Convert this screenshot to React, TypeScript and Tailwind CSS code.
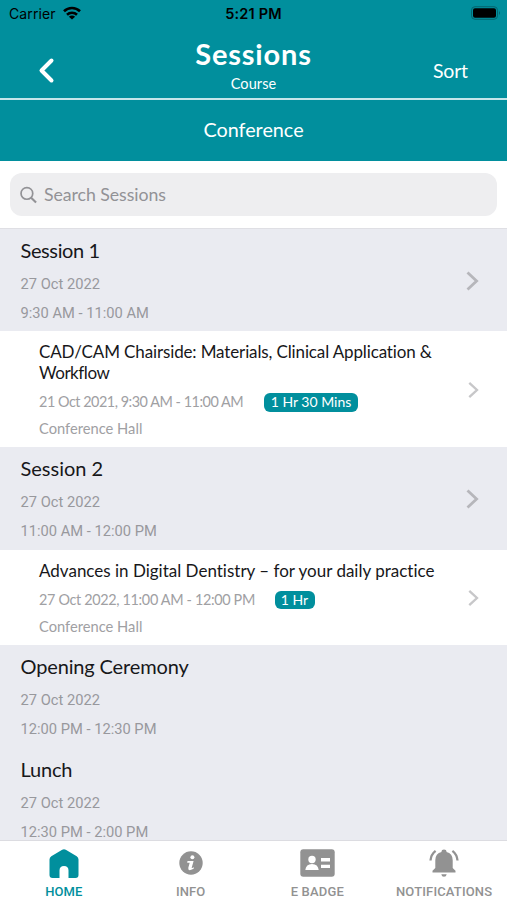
import React from "react";

const lato = "font-['Lato','Liberation_Sans',sans-serif]";

function Chevron({ small = false }: { small?: boolean }) {
  return (
    <svg
      className={small ? "mt-px h-[18px] w-[11px] text-[#c7c7c9]" : "mt-px h-[20px] w-[13px] text-[#b6b6bb]"}
      viewBox="0 0 13 20"
      fill="none"
      stroke="currentColor"
      strokeWidth="2.8"
    >
      <path d="M1.5 1.5 L10.6 10 L1.5 18.5" />
    </svg>
  );
}

function StatusBar() {
  return (
    <div className="flex h-[27px] items-center justify-between px-[8px] font-['Inter',sans-serif] text-black">
      <div className="flex w-40 items-center gap-[7px] pl-px">
        <span className="text-[14px] tracking-[0.1px]">Carrier</span>
        <svg className="-mt-px h-[14px] w-[18px]" viewBox="0 0 18 14" fill="none" stroke="currentColor" strokeWidth="2.6">
          <path d="M1 5.2 A11.5 11.5 0 0 1 17 5.2" />
          <path d="M4 8.7 A7.2 7.2 0 0 1 14 8.7" />
          <path d="M9 13.6 L5.9 10.7 A4.4 4.4 0 0 1 12.1 10.7 Z" fill="currentColor" stroke="none" />
        </svg>
      </div>
      <span className="text-[14.5px] font-semibold tracking-[0.2px]">5:21 PM</span>
      <div className="flex w-40 justify-end">
        <svg className="-mr-[2px] -mt-px h-[14px] w-[30px]" viewBox="0 0 30 14">
          <rect x="0.5" y="0.7" width="26" height="12.6" rx="3.5" fill="none" stroke="#04656f" />
          <rect x="2" y="2.2" width="23" height="9.6" rx="2" fill="#000" />
          <path d="M28 5 Q30 7 28 9 Z" fill="#04656f" />
        </svg>
      </div>
    </div>
  );
}

function Session({ title, time, titleClass = "", frameClass = "", arrow = false }: { title: string; time: string; titleClass?: string; frameClass?: string; arrow?: boolean }) {
  return (
    <section className={`flex h-[103px] shrink-0 items-center justify-between bg-[#eaebf1] pl-[20.5px] pr-7 ${frameClass}`}>
      <div className="flex h-full flex-col whitespace-nowrap pt-[8px]">
        <h2 className={`h-[29px] text-[20px] leading-[27px] text-[#17171a] ${titleClass}`}>{title}</h2>
        <p className="h-[30px] pt-[3px] font-['Roboto',sans-serif] text-[14.7px] leading-[30px] text-[#98989d]">27 Oct 2022</p>
        <p className="font-['Roboto',sans-serif] text-[14.7px] leading-[35px] text-[#98989d]">{time}</p>
      </div>
      {arrow && <Chevron />}
    </section>
  );
}

function Tab({ label, active = false, labelClass, children }: { label: string; active?: boolean; labelClass: string; children: React.ReactNode }) {
  return (
    <div className={`flex flex-1 flex-col items-center pl-px pt-[6px] ${active ? "text-[#018f9d]" : "text-[#929292]"}`}>
      <div className="flex h-[35px] items-center">{children}</div>
      <span className={`whitespace-nowrap font-['Roboto',sans-serif] text-[13px] font-medium leading-[16px] ${labelClass}`}>{label}</span>
    </div>
  );
}

export default function App() {
  return (
    <div className={`flex h-[900px] w-[507px] flex-col overflow-hidden bg-white [font-variant-ligatures:none] ${lato}`}>
      <header className="h-[161px] shrink-0 bg-[#018f9d] text-white">
        <StatusBar />
        <div className="grid h-[73px] grid-cols-[120px_1fr_120px]">
          <div className="pl-[38px] pt-[30px]">
            <svg className="h-[27px] w-[17px]" viewBox="0 0 17 27" fill="none" stroke="currentColor" strokeWidth="4" strokeLinecap="round" strokeLinejoin="round">
              <path d="M13.5 3.5 L3.5 13.5 L13.5 23.5" />
            </svg>
          </div>
          <div className="flex flex-col items-center pt-[9px]">
            <h1 className="text-[29px] font-bold leading-9 tracking-[0.8px]">Sessions</h1>
            <span className="text-[14.5px] leading-[23px] tracking-[0.1px]">Course</span>
          </div>
          <span className="pl-[46px] pt-[30px] text-[19.5px] leading-7 tracking-[-0.2px]">Sort</span>
        </div>
        <div className="-mt-[2px] h-[2px] bg-[#c5e6ea]" />
        <div className="flex h-[59px] items-center justify-center text-[19.8px]">Conference</div>
      </header>

      <div className="h-[67px] shrink-0 px-[10px] pt-3">
        <div className="flex h-[43px] items-center gap-[7px] rounded-[12px] bg-[#eeeef0] pl-[10px] text-[#929296]">
          <svg className="h-[18px] w-[17px]" viewBox="0 0 18 18" fill="none" stroke="currentColor" strokeWidth="1.8">
            <circle cx="7.3" cy="7.3" r="6.2" />
            <path d="M11.8 11.8 L17 17" strokeWidth="2.2" />
          </svg>
          <span className="pt-[2px] text-[17.7px] tracking-[-0.05px]">Search Sessions</span>
        </div>
      </div>

      <main className="flex h-[612px] shrink-0 flex-col overflow-hidden">
        <Session title="Session 1" time="9:30 AM - 11:00 AM" titleClass="tracking-[-0.38px]" frameClass="border-t border-[#dfdfe4]" arrow />
        <article className="flex h-[116px] shrink-0 items-center justify-between pl-[39px] pr-7">
          <div className="h-full whitespace-nowrap pt-[10px]">
            <h3 className="text-[17px] leading-[21px] text-[#17171a]">
              <span className="block tracking-[-0.13px]">CAD/CAM Chairside: Materials, Clinical Application &amp;</span>
              <span className="block tracking-[-0.45px]">Workflow</span>
            </h3>
            <div className="mt-[9px] flex h-[20px] items-center">
              <span className="w-[225px] text-[14.4px] leading-5 tracking-[-0.47px] text-[#a0a0a3]">21 Oct 2021, 9:30 AM - 11:00 AM</span>
              <span className="flex h-[19px] w-[94px] items-center justify-center rounded-[6px] bg-[#018f9d] text-[14px] leading-none text-white">1 Hr 30 Mins</span>
            </div>
            <p className="mt-[6px] text-[14.7px] leading-5 text-[#a0a0a3]">Conference Hall</p>
          </div>
          <Chevron small />
        </article>
        <Session title="Session 2" time="11:00 AM - 12:00 PM" arrow />
        <article className="flex h-[95px] shrink-0 items-center justify-between pl-[39px] pr-7">
          <div className="h-full whitespace-nowrap pt-[10px]">
            <h3 className="text-[17px] leading-[21px] text-[#17171a]">Advances in Digital Dentistry – for your daily practice</h3>
            <div className="mt-[9px] flex h-[20px] items-center">
              <span className="w-[235.5px] text-[14.4px] leading-5 tracking-[-0.33px] text-[#a0a0a3]">27 Oct 2022, 11:00 AM - 12:00 PM</span>
              <span className="flex h-[18px] w-[40px] items-center justify-center rounded-[6px] bg-[#018f9d] text-[14px] leading-none text-white">1 Hr</span>
            </div>
            <p className="mt-[6px] text-[14.7px] leading-5 text-[#a0a0a3]">Conference Hall</p>
          </div>
          <Chevron small />
        </article>
        <Session title="Opening Ceremony" time="12:00 PM - 12:30 PM" titleClass="tracking-[-0.14px]" />
        <Session title="Lunch" time="12:30 PM - 2:00 PM" titleClass="tracking-[-0.2px]" />
      </main>

      <nav className="flex h-[60px] shrink-0 border-t border-[#dcdce1] bg-white">
        <Tab label="HOME" active labelClass="pt-[5px] tracking-[0.1px]">
          <svg className="h-[29px] w-[30px]" viewBox="0 0 30 29" fill="currentColor">
            <path d="M13.2 .8 Q15 -.4 16.8 .8 L27.7 7.3 Q29.5 8.5 29.5 10.5 V26 Q29.5 29 26.5 29 H19.5 V21.5 Q19.5 17 15 17 Q10.5 17 10.5 21.5 V29 H3.5 Q.5 29 .5 26 V10.5 Q.5 8.5 2.3 7.3 Z" />
          </svg>
        </Tab>
        <Tab label="INFO" labelClass="pt-[5px] tracking-[0.1px]">
          <svg className="h-[24px] w-[24px]" viewBox="0 0 24 24" fill="currentColor">
            <circle cx="12" cy="12" r="11.7" />
            <circle cx="13.4" cy="6.3" r="2" fill="#fff" />
            <path d="M8.5 10 H14.6 L12.7 16.7 Q12.8 17.4 15 16.2 L14.6 17.7 Q8.5 21 9.3 16.8 L10.7 11.7 H8.2 Z" fill="#fff" />
          </svg>
        </Tab>
        <Tab label="E BADGE" labelClass="pt-[5px] tracking-[0.2px]">
          <svg className="h-[28px] w-[35px]" viewBox="0 0 35 28" fill="currentColor">
            <rect x="0.3" y="0.3" width="34.4" height="27.4" rx="3" />
            <circle cx="12" cy="10.5" r="3.7" fill="#fff" />
            <path d="M5.3 21 Q6 15 12 15 Q18 15 18.7 21 Z" fill="#fff" />
            <path d="M21 9 H30 V12.5 H21 Z M21 15.7 H30 V19 H21 Z" fill="#fff" />
          </svg>
        </Tab>
        <Tab label="NOTIFICATIONS" labelClass="pt-[5px] tracking-[0.15px]">
          <svg className="h-[28px] w-[30px]" viewBox="0 0 30 28" fill="currentColor">
            <path d="M3.5 23.5 V21.8 L6.3 19 V11.2 Q6.3 4.5 12.5 3 V2.3 Q12.5 .5 15 .5 Q17.5 .5 17.5 2.3 V3 Q23.7 4.5 23.7 11.2 V19 L26.5 21.8 V23.5 Z M12.3 25.2 H17.7 Q17.3 27.8 15 27.8 Q12.7 27.8 12.3 25.2 Z" />
            <path d="M6.6 1.8 Q2 5.3 1.5 11.5 M23.4 1.8 Q28 5.3 28.5 11.5" fill="none" stroke="currentColor" strokeWidth="2.3" />
          </svg>
        </Tab>
      </nav>
    </div>
  );
}
